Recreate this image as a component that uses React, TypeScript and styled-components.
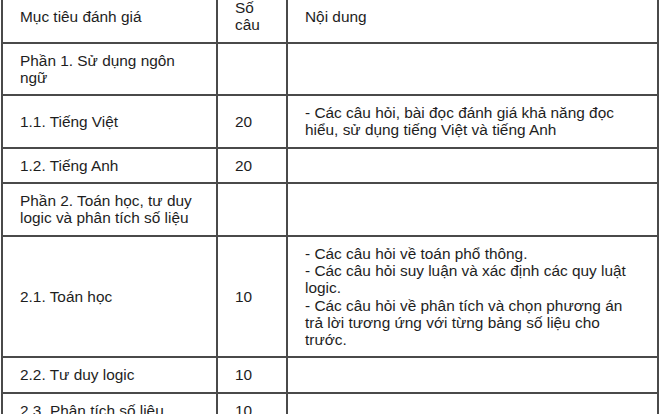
import styled, { createGlobalStyle } from "styled-components";

const GlobalStyle = createGlobalStyle`
  html, body {
    margin: 0;
    padding: 0;
    background: #ffffff;
    overflow: hidden;
  }
`;

const Page = styled.div`
  width: 660px;
  height: 414px;
  overflow: hidden;
  background: #ffffff;
`;

const Table = styled.table`
  width: 656px;
  margin: -11px 0 0 1px;
  border-collapse: collapse;
  table-layout: fixed;
  font-family: "Liberation Sans", Arial, sans-serif;
  font-size: 15.4px;
  line-height: 17.3px;
  color: #1e1e1e;
`;

const Col = styled.col<{ $width: number }>`
  width: ${(p) => p.$width}px;
`;

const Cell = styled.td`
  border: 2px solid #4a4a4a;
  padding: 8px 17px;
  vertical-align: middle;
  text-align: left;
`;

const Line = styled.div`
  white-space: normal;
`;

type Row = {
  goal: string;
  count?: string;
  content?: string[];
};

const rows: Row[] = [
  { goal: "Mục tiêu đánh giá", count: "Số câu", content: ["Nội dung"] },
  { goal: "Phần 1. Sử dụng ngôn ngữ" },
  {
    goal: "1.1. Tiếng Việt",
    count: "20",
    content: ["- Các câu hỏi, bài đọc đánh giá khả năng đọc hiểu, sử dụng tiếng Việt và tiếng Anh"],
  },
  { goal: "1.2. Tiếng Anh", count: "20" },
  { goal: "Phần 2. Toán học, tư duy logic và phân tích số liệu" },
  {
    goal: "2.1. Toán học",
    count: "10",
    content: [
      "- Các câu hỏi về toán phổ thông.",
      "- Các câu hỏi suy luận và xác định các quy luật logic.",
      "- Các câu hỏi về phân tích và chọn phương án trả lời tương ứng với từng bảng số liệu cho trước.",
    ],
  },
  { goal: "2.2. Tư duy logic", count: "10" },
  { goal: "2.3. Phân tích số liệu", count: "10" },
];

export default function App() {
  return (
    <Page>
      <GlobalStyle />
      <Table>
        <colgroup>
          <Col $width={215} />
          <Col $width={70} />
          <Col $width={371} />
        </colgroup>
        <tbody>
          {rows.map((row) => (
            <tr key={row.goal}>
              <Cell>{row.goal}</Cell>
              <Cell>{row.count}</Cell>
              <Cell>
                {row.content?.map((line) => (
                  <Line key={line}>{line}</Line>
                ))}
              </Cell>
            </tr>
          ))}
        </tbody>
      </Table>
    </Page>
  );
}
